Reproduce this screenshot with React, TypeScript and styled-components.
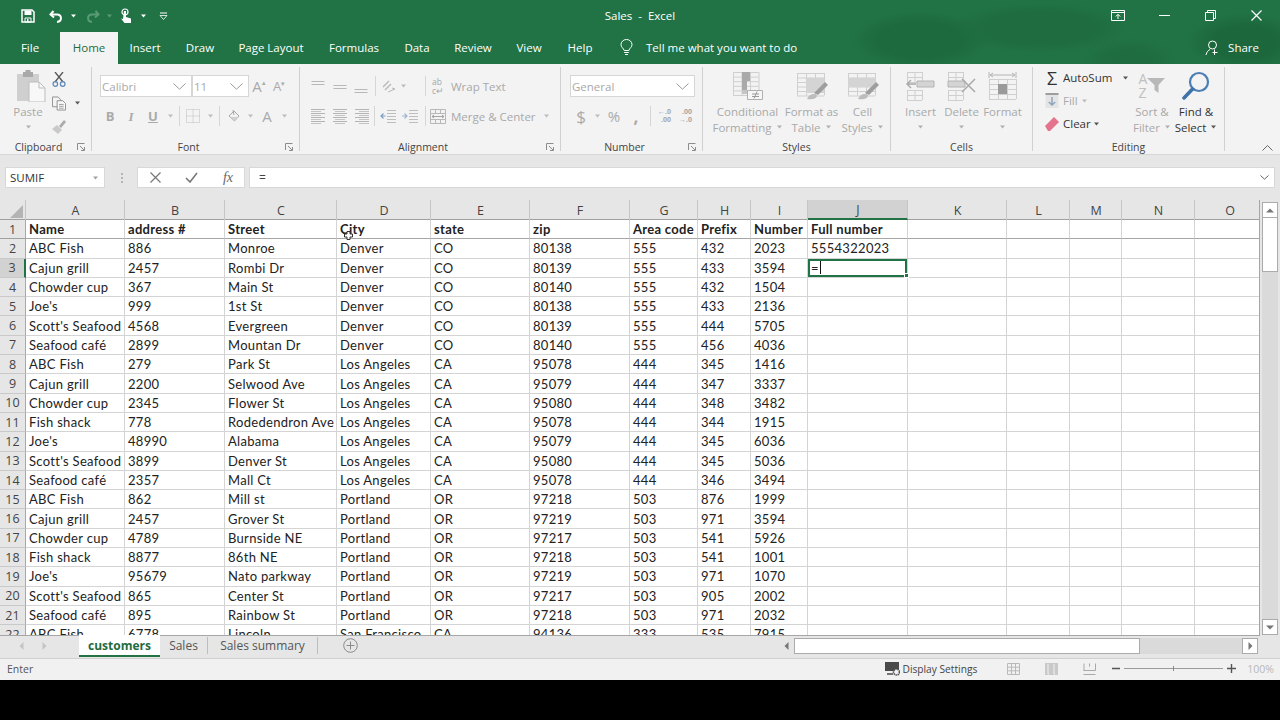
import React from "react";
import styled, { createGlobalStyle } from "styled-components";

const UI = `"Open Sans", "Noto Sans", sans-serif`;
const GREEN = "#217346";
const MUTED = "#a9a9a9";

const Global = createGlobalStyle`
  html, body { margin: 0; padding: 0; background: #000; }
  body { font-family: ${UI}; width: 1280px; height: 720px; overflow: hidden; }
  * { box-sizing: border-box; }
  svg { display: block; }
`;

const Window = styled.div`
  width: 1280px;
  height: 680px;
  display: flex;
  flex-direction: column;
  background: #e6e6e6;
`;

/* ---------- header ---------- */
const Header = styled.header`
  height: 64px;
  flex: none;
  color: #fff;
  background:
    radial-gradient(ellipse 70px 30px at 920px 40px, #1d6a3f 60%, transparent 100%),
    radial-gradient(ellipse 90px 26px at 1040px 28px, #1e6c40 60%, transparent 100%),
    radial-gradient(ellipse 60px 30px at 1245px 42px, #1c673c 50%, transparent 100%),
    radial-gradient(ellipse 50px 26px at 1130px 62px, #1e6c40 40%, transparent 100%),
    ${GREEN};
`;
const TitleRow = styled.div`
  height: 32px;
  display: grid;
  grid-template-columns: 1fr auto 1fr;
  align-items: center;
`;
const Qat = styled.div`
  display: flex;
  align-items: center;
  padding-left: 21px;
`;
const Slot = styled.div<{ $w: number; $ml?: number }>`
  width: ${(p) => p.$w}px;
  margin-left: ${(p) => p.$ml ?? 0}px;
  flex: none;
  display: flex;
  align-items: center;
  justify-content: center;
`;
const Title = styled.div`
  font-size: 11.5px;
  white-space: pre;
  padding-bottom: 2px;
`;
const WinControls = styled.div`
  display: flex;
  justify-content: flex-end;
  align-items: center;
  padding-right: 1px;
  padding-bottom: 2px;
`;
const WinButton = styled.div`
  width: 46px;
  display: flex;
  justify-content: center;
`;
const TabRow = styled.nav`
  height: 32px;
  display: flex;
  align-items: stretch;
`;
const Tab = styled.div<{ $w: number; $active?: boolean }>`
  width: ${(p) => p.$w}px;
  flex: none;
  display: flex;
  align-items: center;
  justify-content: center;
  padding-bottom: 2px;
  font-size: 11.5px;
  color: ${(p) => (p.$active ? "#1f6b41" : "#fff")};
  background: ${(p) => (p.$active ? "#f3f3f3" : "transparent")};
`;
const TellMe = styled.div`
  display: flex;
  align-items: center;
  gap: 13px;
  padding-left: 12px;
  padding-bottom: 2px;
  font-size: 11.5px;
`;
const Share = styled.div`
  margin-left: auto;
  padding-right: 21px;
  padding-bottom: 1px;
  display: flex;
  align-items: center;
  gap: 9px;
  font-size: 11.5px;
`;

/* ---------- ribbon ---------- */
const Ribbon = styled.section`
  height: 91px;
  flex: none;
  display: flex;
  align-items: flex-start;
  background: #f3f3f3;
  border-bottom: 1px solid #d6d6d6;
  padding-top: 3px;
`;
const Group = styled.div<{ $w: number }>`
  width: ${(p) => p.$w}px;
  height: 84px;
  flex: none;
  display: flex;
  flex-direction: column;
  border-right: 1px solid #d0d0d0;
`;
const GroupBody = styled.div<{ $pl?: number }>`
  flex: 1;
  min-height: 0;
  display: flex;
  padding-left: ${(p) => p.$pl ?? 0}px;
`;
const GroupLabel = styled.div`
  height: 16px;
  margin-bottom: -4px;
  flex: none;
  display: flex;
  align-items: center;
  font-size: 10.5px;
  color: #444;
`;
const GroupName = styled.div`
  flex: 1;
  text-align: center;
`;
const Launcher = styled.div`
  width: 14px;
  flex: none;
  display: flex;
  justify-content: flex-start;
`;
const Stack = styled.div`
  display: flex;
  flex-direction: column;
  padding-top: 7px;
  gap: 6px;
`;
const ToolRow = styled.div`
  height: 24px;
  display: flex;
  align-items: center;
`;
const ClipLine = styled.div`
  height: 23.5px;
  display: flex;
  align-items: center;
`;
const Combo = styled.div<{ $w: number }>`
  width: ${(p) => p.$w}px;
  height: 22px;
  flex: none;
  display: flex;
  align-items: center;
  justify-content: space-between;
  padding: 0 5px 0 1px;
  background: #fff;
  border: 1px solid #d6d6d6;
  font-size: 11.5px;
  color: ${MUTED};
`;
const Sep = styled.div`
  width: 1px;
  height: 20px;
  flex: none;
  background: #d6d6d6;
`;
const Glyph = styled.span<{ $size?: number; $bold?: boolean; $italic?: boolean; $under?: boolean; $serif?: boolean; $color?: string }>`
  font-size: ${(p) => p.$size ?? 13}px;
  font-weight: ${(p) => (p.$bold ? 700 : 400)};
  font-style: ${(p) => (p.$italic ? "italic" : "normal")};
  text-decoration: ${(p) => (p.$under ? "underline" : "none")};
  font-family: ${(p) => (p.$serif ? `"Liberation Serif", serif` : UI)};
  color: ${(p) => p.$color ?? "#aaa"};
  line-height: 1;
`;
const Hat = styled.span`
  font-size: 7px;
  vertical-align: top;
`;
const ToolText = styled.span<{ $ml?: number; $dark?: boolean }>`
  font-size: 11.5px;
  margin-left: ${(p) => p.$ml ?? 0}px;
  color: ${(p) => (p.$dark ? "#333" : MUTED)};
  white-space: nowrap;
`;
const TinyStack = styled.div<{ $size?: number; $lh?: number; $weight?: number }>`
  display: flex;
  flex-direction: column;
  font-size: ${(p) => p.$size ?? 8}px;
  line-height: ${(p) => p.$lh ?? 8}px;
  font-weight: ${(p) => p.$weight ?? 400};
  color: #a6a6a6;
  white-space: nowrap;
`;
const TinyLine = styled.span<{ $right?: boolean }>`
  display: block;
  text-align: ${(p) => (p.$right ? "right" : "left")};
`;
const BigRow = styled.div<{ $pl?: number }>`
  display: flex;
  padding-left: ${(p) => p.$pl ?? 0}px;
`;
const Big = styled.div<{ $w: number; $dark?: boolean }>`
  width: ${(p) => p.$w}px;
  flex: none;
  display: flex;
  flex-direction: column;
  align-items: center;
  font-size: 11.5px;
  line-height: 15.5px;
  color: ${(p) => (p.$dark ? "#333" : MUTED)};
  white-space: nowrap;
`;
const BigIcon = styled.div<{ $pl?: number }>`
  height: 37px;
  padding-left: ${(p) => p.$pl ?? 0}px;
  display: flex;
  align-items: center;
  justify-content: center;
`;
const BigCaretLine = styled.div`
  height: 15.5px;
  display: flex;
  align-items: center;
  gap: 4px;
`;
const Stacked = styled.div`
  display: flex;
  flex-direction: column;
  width: 91px;
  flex: none;
  margin-top: -1px;
`;
const StackLine = styled.div`
  height: 23px;
  display: flex;
  align-items: center;
`;
const ClipSide = styled.div`
  display: flex;
  flex-direction: column;
  padding-top: 1px;
  margin-left: -4px;
`;
const SortBox = styled.div`
  display: flex;
  align-items: center;
`;
const SortLetters = styled.div`
  display: flex;
  flex-direction: column;
  font-size: 14px;
  line-height: 14px;
  color: #c0c0c0;
`;
const RibbonTail = styled.div`
  flex: 1;
  height: 84px;
  display: flex;
  align-items: flex-end;
  justify-content: flex-end;
  padding-right: 7px;
`;

/* ---------- formula bar ---------- */
const FormulaBar = styled.div`
  height: 45px;
  flex: none;
  display: flex;
  align-items: flex-start;
  padding: 12px 5px 0 5px;
`;
const NameBox = styled.div`
  width: 100px;
  height: 21px;
  flex: none;
  background: #fff;
  border: 1px solid #d8d8d8;
  display: flex;
  align-items: center;
  justify-content: space-between;
  padding: 0 5px 0 4px;
  font-size: 11.5px;
  color: #333;
`;
const Dots = styled.div`
  width: 32px;
  height: 21px;
  flex: none;
  display: flex;
  align-items: center;
  justify-content: center;
`;
const FxBox = styled.div`
  width: 108px;
  height: 21px;
  flex: none;
  background: #fff;
  border: 1px solid #d8d8d8;
  display: flex;
  align-items: center;
`;
const FormulaInput = styled.div`
  flex: 1;
  height: 21px;
  margin-left: 4px;
  background: #fff;
  border: 1px solid #d8d8d8;
  display: flex;
  align-items: center;
  justify-content: space-between;
  padding: 0 5px 0 9px;
  font-size: 12px;
  color: #444;
`;

/* ---------- sheet ---------- */
const COLS = "26px 99px 100px 112px 94px 99px 100px 68px 53px 57px 100px 99px 63px 52px 73px 70px";
const SheetArea = styled.div`
  height: 436px;
  flex: none;
  display: flex;
  overflow: hidden;
`;
const Sheet = styled.div`
  width: 1260px;
  flex: none;
  display: flex;
  flex-direction: column;
  overflow: hidden;
  background: #fff;
  border-right: 1px solid #a6a6a6;
  border-bottom: 1px solid #a6a6a6;
`;
const ColHeaders = styled.div`
  height: 20px;
  flex: none;
  display: grid;
  grid-template-columns: ${COLS};
  background: #e6e6e6;
  border-bottom: 1px solid #a0a0a0;
`;
const Corner = styled.div`
  display: flex;
  align-items: flex-end;
  justify-content: flex-end;
  padding: 0 2px 2px 0;
  border-right: 1px solid #c6c6c6;
`;
const ColHead = styled.div<{ $sel?: boolean }>`
  display: flex;
  align-items: center;
  justify-content: center;
  padding-left: 1px;
  font-size: 12.5px;
  color: #444;
  border-right: 1px solid #c6c6c6;
  background: ${(p) => (p.$sel ? "#d2d2d2" : "transparent")};
  height: ${(p) => (p.$sel ? "20px" : "auto")};
  border-bottom: ${(p) => (p.$sel ? `2px solid ${GREEN}` : "none")};
`;
const Rows = styled.div`
  flex: 1;
  display: grid;
  grid-auto-rows: 19.3px;
  overflow: hidden;
`;
const Row = styled.div`
  display: grid;
  grid-template-columns: ${COLS};
  height: 19.3px;
`;
const RowHead = styled.div<{ $sel?: boolean; $first?: boolean }>`
  display: flex;
  align-items: center;
  justify-content: center;
  font-size: 12.5px;
  color: #444;
  background: ${(p) => (p.$sel ? "#d2d2d2" : "#e6e6e6")};
  border-bottom: 1px solid ${(p) => (p.$first ? "#a0a0a0" : "#c9c9c9")};
  border-right: ${(p) => (p.$sel ? `2px solid ${GREEN}` : "1px solid #a8a8a8")};
`;
const Cell = styled.div<{ $bold?: boolean; $first?: boolean; $sel?: boolean }>`
  position: relative;
  display: flex;
  align-items: center;
  padding-left: 3px;
  font-family: "Lato", "Open Sans", sans-serif;
  font-size: 13px;
  letter-spacing: 0.3px;
  font-weight: ${(p) => (p.$bold ? 700 : 400)};
  color: #222;
  white-space: nowrap;
  border-right: 1px solid #d4d4d4;
  border-bottom: 1px solid ${(p) => (p.$first ? "#a6a6a6" : "#d4d4d4")};
  ${(p) => (p.$sel ? `box-shadow: inset 0 0 0 2px ${GREEN}; z-index: 2;` : "")}
`;
const Caret = styled.span`
  display: inline-block;
  width: 1px;
  height: 13px;
  margin-left: 1px;
  background: #111;
`;
const FillHandle = styled.span`
  position: absolute;
  right: -2px;
  bottom: -1px;
  width: 5px;
  height: 5px;
  background: ${GREEN};
  border: 1px solid #fff;
`;
const Pointer = styled.span`
  position: absolute;
  left: 7px;
  top: 11px;
`;

/* ---------- vertical scrollbar ---------- */
const VScroll = styled.div`
  flex: 1;
  display: flex;
  flex-direction: column;
  padding: 2px 2px 1px 2px;
`;
const ScrollBtn = styled.div`
  width: 16px;
  height: 16px;
  flex: none;
  background: #fff;
  border: 1px solid #ababab;
  display: flex;
  align-items: center;
  justify-content: center;
`;
const VThumb = styled.div`
  width: 16px;
  height: 54px;
  flex: none;
  background: #fff;
  border: 1px solid #ababab;
  border-top: none;
`;
const Track = styled.div`
  flex: 1;
  align-self: stretch;
  background: #dadada;
`;

/* ---------- tab strip ---------- */
const TabStrip = styled.div`
  height: 22px;
  flex: none;
  display: flex;
  align-items: stretch;
  background: #e6e6e6;
`;
const Nav = styled.div`
  width: 79px;
  flex: none;
  display: flex;
  align-items: center;
  padding-left: 19px;
  padding-bottom: 3px;
  gap: 18px;
`;
const SheetTab = styled.div<{ $w: number; $active?: boolean }>`
  width: ${(p) => p.$w}px;
  flex: none;
  display: flex;
  align-items: center;
  justify-content: center;
  font-size: 12px;
  font-weight: ${(p) => (p.$active ? 700 : 400)};
  color: ${(p) => (p.$active ? "#1f6b41" : "#555")};
  background: ${(p) => (p.$active ? "#fff" : "transparent")};
  margin-top: ${(p) => (p.$active ? "-1px" : "0")};
  height: ${(p) => (p.$active ? "22px" : "auto")};
  border-bottom: ${(p) => (p.$active ? `2px solid ${GREEN}` : "none")};
  padding-bottom: ${(p) => (p.$active ? "0" : "3px")};
`;
const TabSep = styled.div`
  width: 1px;
  height: 17px;
  align-self: center;
  margin-bottom: 3px;
  background: #bdbdbd;
`;
const AddSheet = styled.div`
  width: 64px;
  flex: none;
  display: flex;
  align-items: center;
  justify-content: center;
  padding-bottom: 3px;
`;
const HScroll = styled.div`
  margin-left: auto;
  margin-right: 22px;
  width: 480px;
  height: 16px;
  margin-top: 2px;
  display: flex;
  align-items: center;
`;
const ArrowCell = styled.div`
  width: 16px;
  flex: none;
  display: flex;
  justify-content: center;
`;
const HThumb = styled.div`
  width: 346px;
  height: 16px;
  flex: none;
  background: #fff;
  border: 1px solid #ababab;
`;

/* ---------- status ---------- */
const StatusBar = styled.footer`
  height: 22px;
  flex: none;
  display: flex;
  align-items: center;
  background: #f1f1f1;
  border-top: 1px solid #d0d0d0;
  font-size: 10.5px;
  color: #555;
  padding: 0 0 2px 7px;
`;
const StatusRight = styled.div`
  margin-left: auto;
  display: flex;
  align-items: center;
  padding-right: 6px;
`;
const DisplayLabel = styled.span`
  margin-left: 2px;
  font-size: 10.2px;
  color: #444;
  white-space: nowrap;
`;
const ZoomTrack = styled.div`
  width: 99px;
  height: 1px;
  background: #9a9a9a;
  display: flex;
  justify-content: center;
`;
const ZoomTick = styled.div`
  width: 1px;
  height: 5px;
  margin-top: -2px;
  background: #8a8a8a;
`;
const ZoomText = styled.span`
  margin-left: 8px;
  color: #b8b8b8;
  font-size: 10.5px;
`;

/* ---------- icons ---------- */
const S = ({ w, h, children }: { w: number; h: number; children: React.ReactNode }) => (
  <svg width={w} height={h} viewBox={`0 0 ${w} ${h}`} fill="none">
    {children}
  </svg>
);
const Drop = ({ c = "#a0a0a0" }: { c?: string }) => (
  <S w={7} h={4}>
    <path d="M1 0.5h5L3.5 3.5z" fill={c} />
  </S>
);
const Chevron = ({ w = 13, h = 7, c = "#9a9a9a" }: { w?: number; h?: number; c?: string }) => (
  <S w={w} h={h}>
    <path d={`M0.5 0.5L${w / 2} ${h - 0.8}L${w - 0.5} 0.5`} stroke={c} />
  </S>
);
const LauncherIcon = ({ c = "#8c8c8c" }: { c?: string }) => (
  <S w={8} h={8}>
    <path d="M0.5 7V0.5H7.5M3 3l4 4M4 7.5h3.5V4" stroke={c} />
  </S>
);
const SaveIcon = () => (
  <S w={14} h={14}>
    <path d="M1 1h10l2 2v10H1z" stroke="#fff" strokeWidth="1.5" />
    <path d="M3.5 1.5h7v4.5h-7z" fill="#fff" />
    <path d="M4 9h6v4H4z" stroke="#fff" />
    <path d="M6 10h1.5v3H6z" fill="#fff" />
  </S>
);
const UndoIcon = () => (
  <S w={14} h={13}>
    <path d="M4.5 1L1.5 4.5L5 7.5" stroke="#fff" strokeWidth="2" />
    <path d="M2 4.5h6c5 0 5.5 7 0 7.5" stroke="#fff" strokeWidth="2" />
  </S>
);
const RedoIcon = () => (
  <S w={14} h={13}>
    <path d="M9.5 1L12.5 4.5L9 7.5" stroke="#5a9a77" strokeWidth="2" />
    <path d="M12 4.5H6c-5 0-5.5 7 0 7.5" stroke="#5a9a77" strokeWidth="2" />
  </S>
);
const TouchIcon = () => (
  <S w={12} h={16}>
    <circle cx="5" cy="4" r="3" stroke="#fff" strokeWidth="1.2" />
    <path d="M4 3h2v6l5 1.5V15H4.5L1 10.5l2 .5z" fill="#fff" />
  </S>
);
const CustomizeIcon = () => (
  <S w={9} h={8}>
    <path d="M1 1h7" stroke="#fff" />
    <path d="M1 3.5h7L4.5 7.5z" stroke="#fff" strokeWidth=".8" />
  </S>
);
const RibbonDisplayIcon = () => (
  <S w={14} h={11}>
    <path d="M.5.5h13v10H.5z" stroke="#fff" />
    <path d="M.5 2.5h13" stroke="#fff" />
    <path d="M7 9V4.5M4.8 6.5L7 4.3l2.2 2.2" stroke="#fff" />
  </S>
);
const BulbIcon = () => (
  <S w={13} h={17}>
    <path d="M4.2 11.5C3.5 9 1 8.5 1 5.6a5.5 5.1 0 0 1 11 0c0 2.9-2.5 3.4-3.2 5.9z" stroke="#fff" />
    <path d="M4.2 13.5h4.6M5 15.5h3" stroke="#fff" />
  </S>
);
const PersonIcon = () => (
  <S w={14} h={16}>
    <circle cx="7.5" cy="5" r="4" stroke="#fff" />
    <path d="M1 15c.6-3 2.5-5 4-5.5M9.5 9.5V15M7.5 12.5h5" stroke="#fff" />
  </S>
);
const PasteIcon = () => (
  <S w={30} h={32}>
    <path d="M1 4h22v27H1z" fill="#cfcfcf" />
    <path d="M7 2h10v5H7z" fill="#a9a9a9" />
    <path d="M9.5 0h5v3h-5z" fill="#a9a9a9" />
    <path d="M13 12h10l6 6v14H13z" fill="#f8f8f8" stroke="#bdbdbd" />
    <path d="M23 12v6h6" stroke="#bdbdbd" />
  </S>
);
const ScissorsIcon = () => (
  <S w={14} h={15}>
    <path d="M3 0l8 10M11 0L3 10" stroke="#555" strokeWidth="1.3" />
    <circle cx="3.3" cy="12" r="2.3" stroke="#5b86b5" strokeWidth="1.2" />
    <circle cx="10.7" cy="12" r="2.3" stroke="#5b86b5" strokeWidth="1.2" />
  </S>
);
const CopyIcon = () => (
  <S w={15} h={15}>
    <path d="M.5.5h6l2.5 2.5v8H.5z" fill="#f3f3f3" stroke="#8c8c8c" />
    <path d="M5.5 4.5h6l3 3v7h-9z" fill="#f9f9f9" stroke="#8c8c8c" />
    <path d="M7.5 8.5h5M7.5 10.5h5M7.5 12.5h5" stroke="#9a9a9a" />
  </S>
);
const BrushIcon = () => (
  <S w={14} h={14}>
    <path d="M0 9l5-4 5 5-4 4z" fill="#c9c9c9" />
    <path d="M7 6l5-6 2 2-5 6z" fill="#ababab" />
  </S>
);
const BordersIcon = () => (
  <S w={14} h={14}>
    <path d="M.5.5h13v13H.5z" stroke="#bdbdbd" strokeDasharray="1 1" />
    <path d="M7 .5v13M.5 7h13" stroke="#bdbdbd" strokeDasharray="1 1" />
  </S>
);
const FillColorIcon = () => (
  <S w={14} h={14}>
    <path d="M2 7l5-5 5 5-4.5 5z" stroke="#a6a6a6" />
    <path d="M6 1l1 5" stroke="#a6a6a6" />
    <path d="M3 8h8l-3.5 4z" fill="#d0d0d0" />
  </S>
);
const LinesIcon = ({ kind }: { kind: "l" | "c" | "r" | "top" | "mid" | "bot" }) => {
  if (kind === "top" || kind === "mid" || kind === "bot") {
    const y = kind === "top" ? 1 : kind === "mid" ? 5 : 9;
    return (
      <S w={14} h={13}>
        <path d={`M.5 ${y + 0.5}h13M.5 ${y + 3.5}h13`} stroke="#b8b8b8" />
      </S>
    );
  }
  return (
    <S w={14} h={15}>
      <path d="M0 .5h14M0 4.5h14M0 8.5h14M0 12.5h14" stroke="#b4b4b4" />
      <path
        d={kind === "l" ? "M0 2.5h10M0 6.5h10M0 10.5h10M0 14.5h10" : kind === "c" ? "M2 2.5h10M2 6.5h10M2 10.5h10M2 14.5h10" : "M4 2.5h10M4 6.5h10M4 10.5h10M4 14.5h10"}
        stroke="#c4c4c4"
      />
    </S>
  );
};
const OrientIcon = () => (
  <S w={14} h={14}>
    <path d="M1 8l6-6M3 11l6-6" stroke="#b8b8b8" strokeWidth="1.4" />
    <path d="M6 13l7-3-3-1" stroke="#b8b8b8" />
  </S>
);
const IndentIcon = ({ out }: { out?: boolean }) => (
  <S w={16} h={14}>
    <path d="M7 1.5h9M7 4.5h9M7 7.5h9M7 10.5h9M7 13.5h9" stroke="#bdbdbd" />
    <path d={out ? "M5.5 7H1M3.5 4.5L1 7l2.5 2.5" : "M0 7h4.5M2.5 4.5L5 7 2.5 9.5"} stroke={out ? "#7e9fc4" : "#9db6d2"} strokeWidth="1.2" />
  </S>
);
const WrapIcon = () => (
  <TinyStack $size={8.5} $lh={9}>
    <TinyLine>ab</TinyLine>
    <TinyLine>c↵</TinyLine>
  </TinyStack>
);
const MergeIcon = () => (
  <S w={16} h={15}>
    <path d="M.5.5h15v14H.5z" stroke="#b8b8b8" />
    <path d="M.5 4.5h15M.5 10.5h15M5.5.5v4M10.5.5v4M5.5 10.5v4M10.5 10.5v4" stroke="#b8b8b8" />
    <path d="M2 7.5h12M4 6l-2 1.5L4 9M12 6l2 1.5L12 9" stroke="#a4a4a4" />
  </S>
);
const DecimalIcon = ({ inc }: { inc?: boolean }) => (
  <TinyStack $size={7} $lh={8} $weight={700}>
    <TinyLine $right>{inc ? "←.0" : ".00"}</TinyLine>
    <TinyLine $right>{inc ? ".00" : "→.0"}</TinyLine>
  </TinyStack>
);
const GridLines = ({ x, y, cols, rows, cw, ch }: { x: number; y: number; cols: number; rows: number; cw: number; ch: number }) => {
  let d = "";
  for (let i = 0; i <= cols; i++) d += `M${x + i * cw + 0.5} ${y}v${rows * ch}`;
  for (let j = 0; j <= rows; j++) d += `M${x} ${y + j * ch + 0.5}h${cols * cw}`;
  return <path d={d} stroke="#cfcfcf" />;
};
const CondIcon = () => (
  <S w={32} h={30}>
    <GridLines x={1} y={1} cols={3} rows={5} cw={8.5} ch={4.6} />
    <path d="M10 1h8v9h-8zM10 10h5v9h-5z" fill="#a9a9a9" />
    <path d="M10 19h8v4h-8z" fill="#c4c4c4" />
    <path d="M15.5 19.5h15v9h-15z" fill="#f6f6f6" stroke="#b0b0b0" />
    <path d="M20 23h7M20 25.5h7M25 20.5l-3 7" stroke="#9a9a9a" />
  </S>
);
const FormatTableIcon = () => (
  <S w={32} h={30}>
    <GridLines x={1} y={2} cols={3} rows={5} cw={9} ch={4.5} />
    <path d="M10 7h18v15H10z" fill="#d4d4d4" />
    <path d="M18 22l11-11 3 3-10 10z" fill="#9e9e9e" />
    <path d="M11 28c2-5 7-6 10-4 0 4-5 5-10 4z" fill="#bdbdbd" />
  </S>
);
const CellStylesIcon = () => (
  <S w={32} h={30}>
    <GridLines x={1} y={2} cols={3} rows={5} cw={9} ch={4.5} />
    <path d="M1 7h28v9H1z" fill="#d4d4d4" />
    <path d="M18 22l11-11 3 3-10 10z" fill="#9e9e9e" />
    <path d="M11 28c2-5 7-6 10-4 0 4-5 5-10 4z" fill="#bdbdbd" />
  </S>
);
const InsertIcon = () => (
  <S w={30} h={30}>
    <GridLines x={1} y={1} cols={2} rows={2} cw={7.5} ch={5} />
    <GridLines x={1} y={19} cols={2} rows={2} cw={7.5} ch={5} />
    <path d="M11 10h17v6H11z" fill="#d4d4d4" stroke="#b4b4b4" />
    <path d="M10 13H1M5 9l-4 4 4 4" stroke="#a9a9a9" strokeWidth="1.4" />
  </S>
);
const DeleteIcon = () => (
  <S w={30} h={30}>
    <GridLines x={1} y={1} cols={2} rows={2} cw={7.5} ch={5} />
    <GridLines x={1} y={19} cols={2} rows={2} cw={7.5} ch={5} />
    <path d="M1 10h17v6H1z" fill="#d4d4d4" stroke="#b4b4b4" />
    <path d="M15 8l13 13M28 8L15 21" stroke="#a9a9a9" strokeWidth="1.5" />
  </S>
);
const FormatCellsIcon = () => (
  <S w={30} h={30}>
    <path d="M1 1v6M28 1v6M2 4h25M2 4l3-2M2 4l3 2M27 4l-3-2M27 4l-3 2" stroke="#b4b4b4" />
    <GridLines x={1} y={8} cols={3} rows={4} cw={9} ch={5} />
    <path d="M10 13h9v10h-9z" fill="#9a9a9a" />
  </S>
);
const FillDownIcon = () => (
  <S w={14} h={15}>
    <path d="M.5 1h13v14H.5z" fill="#e4e4e4" />
    <path d="M.5 1h13" stroke="#9d9d9d" strokeWidth="2" />
    <path d="M7 4v8M3.8 9L7 12l3.2-3" stroke="#8ea4bd" strokeWidth="1.5" />
  </S>
);
const EraserIcon = () => (
  <S w={14} h={14}>
    <path d="M0 9l9-9 5 5-9 9H3z" fill="#e4738d" />
  </S>
);
const FunnelIcon = () => (
  <S w={18} h={15}>
    <path d="M0 0h18l-6.5 7v8l-4-3V7z" fill="#b8b8b8" />
  </S>
);
const FindIcon = () => (
  <S w={28} h={30}>
    <circle cx="17" cy="11" r="9" stroke="#4a7eb5" strokeWidth="2.2" />
    <path d="M10.5 18L2 27" stroke="#3f72a8" strokeWidth="3.5" strokeLinecap="round" />
  </S>
);
const XIcon = ({ c = "#777", size = 11, sw = 1.2 }: { c?: string; size?: number; sw?: number }) => (
  <S w={size} h={size}>
    <path d={`M.5 .5L${size - 0.5} ${size - 0.5}M${size - 0.5} .5L.5 ${size - 0.5}`} stroke={c} strokeWidth={sw} />
  </S>
);
const CheckIcon = () => (
  <S w={13} h={11}>
    <path d="M1 6l4 4 7-9" stroke="#777" strokeWidth="1.6" />
  </S>
);
const TriUp = () => (
  <S w={8} h={5}>
    <path d="M0 4.5h8L4 .5z" fill="#777" />
  </S>
);
const TriDown = () => (
  <S w={8} h={5}>
    <path d="M0 .5h8L4 4.5z" fill="#777" />
  </S>
);
const TriSide = ({ left, c = "#777" }: { left?: boolean; c?: string }) => (
  <S w={5} h={8}>
    <path d={left ? "M4.5 0v8L.5 4z" : "M.5 0v8l4-4z"} fill={c} />
  </S>
);
const PlusCircle = () => (
  <S w={15} h={15}>
    <circle cx="7.5" cy="7.5" r="6.8" stroke="#8a8a8a" />
    <path d="M7.5 3.5v8M3.5 7.5h8" stroke="#8a8a8a" />
  </S>
);
const DisplayIcon = () => (
  <S w={15} h={14}>
    <path d="M0 0h14v9H0z" fill="#4a4a4a" />
    <path d="M2 12h6" stroke="#4a4a4a" strokeWidth="1.5" />
    <circle cx="11.5" cy="10" r="3" fill="#f1f1f1" stroke="#4a4a4a" strokeWidth="1.6" strokeDasharray="1.4 .7" />
  </S>
);
const ViewNormal = () => (
  <S w={13} h={12}>
    <path d="M.5.5h12v11H.5zM4.5.5v11M8.5.5v11M.5 4.2h12M.5 7.8h12" stroke="#b9b9b9" />
  </S>
);
const ViewPage = () => (
  <S w={13} h={12}>
    <path d="M0 0h13v12H0z" fill="#c9c9c9" />
    <path d="M3 1v10h1M9 1v10h1" stroke="#f1f1f1" />
  </S>
);
const ViewBreak = () => (
  <S w={13} h={12}>
    <path d="M.5 7.5h12M.5 11.5h12M1 .5v7M12.5 .5v7M6.5 .5v3" stroke="#a9a9a9" />
  </S>
);
const PlusPointer = () => (
  <S w={9} h={9}>
    <path d="M3 .5h3v2.5h2.5v3H6v2.5H3V6H.5V3H3z" fill="#fff" stroke="#333" />
  </S>
);
const CornerTri = () => (
  <S w={13} h={13}>
    <path d="M13 0v13H0z" fill="#b4b4b4" />
  </S>
);

/* ---------- data ---------- */
const LETTERS = "ABCDEFGHIJKLMNO".split("");
const DATA: string[][] = [
  ["Name", "address #", "Street", "City", "state", "zip", "Area code", "Prefix", "Number", "Full number"],
  ["ABC Fish", "886", "Monroe", "Denver", "CO", "80138", "555", "432", "2023", "5554322023"],
  ["Cajun grill", "2457", "Rombi Dr", "Denver", "CO", "80139", "555", "433", "3594", ""],
  ["Chowder cup", "367", "Main St", "Denver", "CO", "80140", "555", "432", "1504", ""],
  ["Joe's", "999", "1st St", "Denver", "CO", "80138", "555", "433", "2136", ""],
  ["Scott's Seafood", "4568", "Evergreen", "Denver", "CO", "80139", "555", "444", "5705", ""],
  ["Seafood café", "2899", "Mountan Dr", "Denver", "CO", "80140", "555", "456", "4036", ""],
  ["ABC Fish", "279", "Park St", "Los Angeles", "CA", "95078", "444", "345", "1416", ""],
  ["Cajun grill", "2200", "Selwood Ave", "Los Angeles", "CA", "95079", "444", "347", "3337", ""],
  ["Chowder cup", "2345", "Flower St", "Los Angeles", "CA", "95080", "444", "348", "3482", ""],
  ["Fish shack", "778", "Rodedendron Ave", "Los Angeles", "CA", "95078", "444", "344", "1915", ""],
  ["Joe's", "48990", "Alabama", "Los Angeles", "CA", "95079", "444", "345", "6036", ""],
  ["Scott's Seafood", "3899", "Denver St", "Los Angeles", "CA", "95080", "444", "345", "5036", ""],
  ["Seafood café", "2357", "Mall Ct", "Los Angeles", "CA", "95078", "444", "346", "3494", ""],
  ["ABC Fish", "862", "Mill st", "Portland", "OR", "97218", "503", "876", "1999", ""],
  ["Cajun grill", "2457", "Grover St", "Portland", "OR", "97219", "503", "971", "3594", ""],
  ["Chowder cup", "4789", "Burnside NE", "Portland", "OR", "97217", "503", "541", "5926", ""],
  ["Fish shack", "8877", "86th NE", "Portland", "OR", "97218", "503", "541", "1001", ""],
  ["Joe's", "95679", "Nato parkway", "Portland", "OR", "97219", "503", "971", "1070", ""],
  ["Scott's Seafood", "865", "Center St", "Portland", "OR", "97217", "503", "905", "2002", ""],
  ["Seafood café", "895", "Rainbow St", "Portland", "OR", "97218", "503", "971", "2032", ""],
  ["ABC Fish", "6778", "Lincoln", "San Francisco", "CA", "94136", "333", "535", "7915", ""],
];

const Label = ({ name, launcher }: { name: string; launcher?: boolean }) => (
  <GroupLabel>
    <GroupName>{name}</GroupName>
    {launcher && (
      <Launcher>
        <LauncherIcon />
      </Launcher>
    )}
  </GroupLabel>
);

const BigBtn = ({ w, icon, l1, l2, dark }: { w: number; icon: React.ReactNode; l1: string; l2?: string; dark?: boolean }) => (
  <Big $w={w} $dark={dark}>
    <BigIcon>{icon}</BigIcon>
    <div>{l1}</div>
    <BigCaretLine>
      {l2}
      <Drop c={dark ? "#555" : "#b0b0b0"} />
    </BigCaretLine>
  </Big>
);

export default function App() {
  return (
    <Window>
      <Global />
      <Header>
        <TitleRow>
          <Qat>
            <SaveIcon />
            <Slot $w={14} />
            <UndoIcon />
            <Slot $w={20}><Drop c="#fff" /></Slot>
            <Slot $w={20}><RedoIcon /></Slot>
            <Slot $w={12}><Drop c="#5a9a77" /></Slot>
            <Slot $w={22}><TouchIcon /></Slot>
            <Slot $w={12}><Drop c="#fff" /></Slot>
            <Slot $w={28}><CustomizeIcon /></Slot>
          </Qat>
          <Title>Sales  -  Excel</Title>
          <WinControls>
            <WinButton><RibbonDisplayIcon /></WinButton>
            <WinButton>
              <S w={11} h={11}><path d="M0 5.5h11" stroke="#fff" /></S>
            </WinButton>
            <WinButton>
              <S w={11} h={11}><path d="M.5 2.5h8v8h-8zM2.5 2.5v-2h8v8h-2" stroke="#fff" /></S>
            </WinButton>
            <WinButton><XIcon c="#fff" /></WinButton>
          </WinControls>
        </TitleRow>
        <TabRow>
          <Tab $w={60}>File</Tab>
          <Tab $w={58} $active>Home</Tab>
          <Tab $w={54}>Insert</Tab>
          <Tab $w={56}>Draw</Tab>
          <Tab $w={86}>Page Layout</Tab>
          <Tab $w={80}>Formulas</Tab>
          <Tab $w={46}>Data</Tab>
          <Tab $w={66}>Review</Tab>
          <Tab $w={46}>View</Tab>
          <Tab $w={56}>Help</Tab>
          <TellMe><BulbIcon />Tell me what you want to do</TellMe>
          <Share><PersonIcon />Share</Share>
        </TabRow>
      </Header>

      <Ribbon>
        <Group $w={92}>
          <GroupBody>
            <Big $w={56}>
              <BigIcon $pl={6}><PasteIcon /></BigIcon>
              <div>Paste</div>
              <BigCaretLine><Drop c="#b0b0b0" /></BigCaretLine>
            </Big>
            <ClipSide>
              <ClipLine><Slot $w={14}><ScissorsIcon /></Slot></ClipLine>
              <ClipLine><Slot $w={14}><CopyIcon /></Slot><Slot $w={22}><Drop c="#555" /></Slot></ClipLine>
              <ClipLine><Slot $w={14}><BrushIcon /></Slot></ClipLine>
            </ClipSide>
          </GroupBody>
          <Label name="Clipboard" launcher />
        </Group>

        <Group $w={208}>
          <GroupBody $pl={8}>
            <Stack>
              <ToolRow>
                <Combo $w={92}>Calibri<Chevron /></Combo>
                <Combo $w={57}>11<Chevron /></Combo>
                <Slot $w={20}><Glyph $size={15}>A<Hat>▴</Hat></Glyph></Slot>
                <Slot $w={20}><Glyph $size={13}>A<Hat>▾</Hat></Glyph></Slot>
              </ToolRow>
              <ToolRow>
                <Slot $w={20}><Glyph $bold>B</Glyph></Slot>
                <Slot $w={22}><Glyph $bold $italic $serif>I</Glyph></Slot>
                <Slot $w={22}><Glyph $under $bold>U</Glyph></Slot>
                <Slot $w={12}><Drop c="#bbb" /></Slot>
                <Slot $w={6}><Sep /></Slot>
                <Slot $w={22}><BordersIcon /></Slot>
                <Slot $w={12}><Drop c="#bbb" /></Slot>
                <Slot $w={6}><Sep /></Slot>
                <Slot $w={24}><FillColorIcon /></Slot>
                <Slot $w={8}><Drop c="#bbb" /></Slot>
                <Slot $w={26}><Glyph $size={15}>A</Glyph></Slot>
                <Slot $w={8}><Drop c="#bbb" /></Slot>
              </ToolRow>
            </Stack>
          </GroupBody>
          <Label name="Font" launcher />
        </Group>

        <Group $w={261}>
          <GroupBody $pl={8}>
            <Stack>
              <ToolRow>
                <Slot $w={20}><LinesIcon kind="top" /></Slot>
                <Slot $w={24}><LinesIcon kind="mid" /></Slot>
                <Slot $w={18}><LinesIcon kind="bot" /></Slot>
                <Slot $w={10}><Sep /></Slot>
                <Slot $w={18}><OrientIcon /></Slot>
                <Slot $w={10}><Drop c="#bbb" /></Slot>
                <Slot $w={12} />
                <Slot $w={10}><Sep /></Slot>
                <Slot $w={16}><WrapIcon /></Slot>
                <ToolText $ml={5}>Wrap Text</ToolText>
              </ToolRow>
              <ToolRow>
                <Slot $w={20}><LinesIcon kind="l" /></Slot>
                <Slot $w={24}><LinesIcon kind="c" /></Slot>
                <Slot $w={20}><LinesIcon kind="r" /></Slot>
                <Slot $w={5}><Sep /></Slot>
                <Slot $w={22}><IndentIcon out /></Slot>
                <Slot $w={22}><IndentIcon /></Slot>
                <Slot $w={8}><Sep /></Slot>
                <Slot $w={18}><MergeIcon /></Slot>
                <ToolText $ml={4}>Merge &amp; Center</ToolText>
                <Slot $w={22}><Drop c="#bbb" /></Slot>
              </ToolRow>
            </Stack>
          </GroupBody>
          <Label name="Alignment" launcher />
        </Group>

        <Group $w={142}>
          <GroupBody $pl={9}>
            <Stack>
              <ToolRow><Combo $w={125}>General<Chevron /></Combo></ToolRow>
              <ToolRow>
                <Slot $w={22}><Glyph $size={17}>$</Glyph></Slot>
                <Slot $w={10}><Drop c="#bbb" /></Slot>
                <Slot $w={24}><Glyph $size={15}>%</Glyph></Slot>
                <Slot $w={20}><Glyph $size={17} $bold>,</Glyph></Slot>
                <Slot $w={8}><Sep /></Slot>
                <Slot $w={21}><DecimalIcon inc /></Slot>
                <Slot $w={21}><DecimalIcon /></Slot>
              </ToolRow>
            </Stack>
          </GroupBody>
          <Label name="Number" launcher />
        </Group>

        <Group $w={188}>
          <GroupBody>
            <BigRow $pl={11}>
              <BigBtn w={67} icon={<CondIcon />} l1="Conditional" l2="Formatting" />
              <BigBtn w={61} icon={<FormatTableIcon />} l1="Format as" l2="Table" />
              <BigBtn w={41} icon={<CellStylesIcon />} l1="Cell" l2="Styles" />
            </BigRow>
          </GroupBody>
          <Label name="Styles" />
        </Group>

        <Group $w={142}>
          <GroupBody>
            <BigRow $pl={9}>
              <BigBtn w={41} icon={<InsertIcon />} l1="Insert" />
              <BigBtn w={41} icon={<DeleteIcon />} l1="Delete" />
              <BigBtn w={41} icon={<FormatCellsIcon />} l1="Format" />
            </BigRow>
          </GroupBody>
          <Label name="Cells" />
        </Group>

        <Group $w={192}>
          <GroupBody $pl={11}>
            <Stacked>
              <StackLine>
                <Slot $w={16}><Glyph $size={18} $color="#333">Σ</Glyph></Slot>
                <ToolText $ml={3} $dark>AutoSum</ToolText>
                <Slot $w={26}><Drop c="#555" /></Slot>
              </StackLine>
              <StackLine>
                <Slot $w={16}><FillDownIcon /></Slot>
                <ToolText $ml={3}>Fill</ToolText>
                <Slot $w={14}><Drop c="#bbb" /></Slot>
              </StackLine>
              <StackLine>
                <Slot $w={16}><EraserIcon /></Slot>
                <ToolText $ml={3} $dark>Clear</ToolText>
                <Slot $w={12}><Drop c="#555" /></Slot>
              </StackLine>
            </Stacked>
            <Big $w={34}>
              <BigIcon>
                <SortBox>
                  <SortLetters><span>A</span><span>Z</span></SortLetters>
                  <FunnelIcon />
                </SortBox>
              </BigIcon>
              <div>Sort &amp;</div>
              <BigCaretLine>Filter<Drop c="#b0b0b0" /></BigCaretLine>
            </Big>
            <Big $w={54} $dark>
              <BigIcon><FindIcon /></BigIcon>
              <div>Find &amp;</div>
              <BigCaretLine>Select<Drop c="#555" /></BigCaretLine>
            </Big>
          </GroupBody>
          <Label name="Editing" />
        </Group>
        <RibbonTail>
          <S w={11} h={6}><path d="M.5 5.5L5.5.5l5 5" stroke="#666" /></S>
        </RibbonTail>
      </Ribbon>

      <FormulaBar>
        <NameBox>SUMIF<Drop /></NameBox>
        <Dots>
          <S w={3} h={12}><path d="M1 1h2v2H1zM1 5h2v2H1zM1 9h2v2H1z" fill="#b4b4b4" /></S>
        </Dots>
        <FxBox>
          <Slot $w={34}><XIcon /></Slot>
          <Slot $w={38}><CheckIcon /></Slot>
          <Slot $w={36}><Glyph $size={14} $italic $serif $color="#666">fx</Glyph></Slot>
        </FxBox>
        <FormulaInput>=<Chevron w={9} h={5} c="#666" /></FormulaInput>
      </FormulaBar>

      <SheetArea>
        <Sheet>
          <ColHeaders>
            <Corner><CornerTri /></Corner>
            {LETTERS.map((l) => (
              <ColHead key={l} $sel={l === "J"}>{l}</ColHead>
            ))}
          </ColHeaders>
          <Rows>
            {DATA.map((row, r) => (
              <Row key={r}>
                <RowHead $sel={r === 2} $first={r === 0}>{r + 1}</RowHead>
                {LETTERS.map((_, c) => {
                  const sel = r === 2 && c === 9;
                  return (
                    <Cell key={c} $bold={r === 0} $first={r === 0} $sel={sel}>
                      {row[c] ?? ""}
                      {r === 0 && c === 3 && (
                        <Pointer><PlusPointer /></Pointer>
                      )}
                      {sel && (
                        <>
                          =<Caret />
                          <FillHandle />
                        </>
                      )}
                    </Cell>
                  );
                })}
              </Row>
            ))}
          </Rows>
        </Sheet>
        <VScroll>
          <ScrollBtn><TriUp /></ScrollBtn>
          <VThumb />
          <Track />
          <ScrollBtn><TriDown /></ScrollBtn>
        </VScroll>
      </SheetArea>

      <TabStrip>
        <Nav>
          <TriSide left c="#c4c4c4" />
          <TriSide c="#c4c4c4" />
        </Nav>
        <SheetTab $w={81} $active>customers</SheetTab>
        <SheetTab $w={47}>Sales</SheetTab>
        <TabSep />
        <SheetTab $w={109}>Sales summary</SheetTab>
        <TabSep />
        <AddSheet><PlusCircle /></AddSheet>
        <HScroll>
          <ArrowCell><TriSide left /></ArrowCell>
          <HThumb />
          <Track />
          <ScrollBtn><TriSide /></ScrollBtn>
        </HScroll>
      </TabStrip>

      <StatusBar>
        Enter
        <StatusRight>
          <DisplayIcon />
          <DisplayLabel>Display Settings</DisplayLabel>
          <Slot $w={37} $ml={18}><ViewNormal /></Slot>
          <Slot $w={38}><ViewPage /></Slot>
          <Slot $w={38}><ViewBreak /></Slot>
          <Slot $w={16}><S w={8} h={3}><path d="M0 1.5h8" stroke="#555" strokeWidth="1.5" /></S></Slot>
          <ZoomTrack><ZoomTick /></ZoomTrack>
          <Slot $w={16}><S w={9} h={9}><path d="M0 4.5h9M4.5 0v9" stroke="#555" strokeWidth="1.4" /></S></Slot>
          <ZoomText>100%</ZoomText>
        </StatusRight>
      </StatusBar>
    </Window>
  );
}
